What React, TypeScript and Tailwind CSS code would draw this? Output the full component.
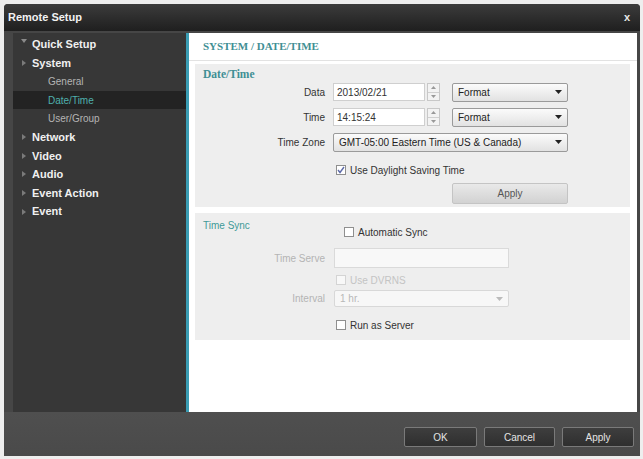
import React from "react";

const F = { fontFamily: '"Liberation Sans", Arial, sans-serif' };
const SERIF = { fontFamily: '"Liberation Serif", "Times New Roman", serif' };

function Tri({ down }: { down?: boolean }) {
  return (
    <svg width="6" height="6" viewBox="0 0 6 6" className="shrink-0">
      {down ? <path d="M0 1 L6 1 L3 5 Z" fill="#8a8a8a" /> : <path d="M1 0 L5 3 L1 6 Z" fill="#7a7a7a" />}
    </svg>
  );
}

function Caret({ color = "#222" }: { color?: string }) {
  return (
    <svg width="7" height="4" viewBox="0 0 7 4">
      <path d="M0 0 L7 0 L3.5 4 Z" fill={color} />
    </svg>
  );
}

function Select({ text, w, disabled }: { text: string; w: string; disabled?: boolean }) {
  return (
    <div
      className={`${w} h-full flex items-center justify-between px-[5px] rounded-[2px] border ${
        disabled
          ? "border-[#d8d8d8] bg-[#f7f7f7] text-[#b8b8b8]"
          : "border-[#9a9a9a] bg-gradient-to-b from-[#fbfbfb] to-[#e2e2e2] text-[#222]"
      } text-[10px]`}
    >
      <span>{text}</span>
      <Caret color={disabled ? "#bbb" : "#222"} />
    </div>
  );
}

function Check({ checked, label, disabled }: { checked?: boolean; label: string; disabled?: boolean }) {
  return (
    <div className={`flex items-center gap-[4px] text-[10px] ${disabled ? "text-[#c4c4c4]" : "text-[#333]"}`}>
      <div
        className={`w-[10px] h-[10px] border ${
          disabled ? "border-[#d4d4d4] bg-[#f8f8f8]" : "border-[#8f8f8f] bg-white"
        } flex items-center justify-center`}
      >
        {checked && (
          <svg width="8" height="8" viewBox="0 0 8 8">
            <path d="M1 4 L3 6.5 L7 1" stroke="#5d6aa8" strokeWidth="1.4" fill="none" />
          </svg>
        )}
      </div>
      <span>{label}</span>
    </div>
  );
}

function Label({ text, disabled }: { text: string; disabled?: boolean }) {
  return (
    <div className={`w-[130px] text-right text-[10px] ${disabled ? "text-[#b4b4b4]" : "text-[#333]"}`}>
      {text}
    </div>
  );
}

function Spinner() {
  return (
    <div className="w-[13px] h-[18px] ml-[2px] flex flex-col border border-[#c8c8c8] bg-[#f3f3f3]">
      <div className="flex-1 flex items-center justify-center border-b border-[#d0d0d0]">
        <svg width="5" height="3" viewBox="0 0 5 3"><path d="M0 3 L5 3 L2.5 0 Z" fill="#999" /></svg>
      </div>
      <div className="flex-1 flex items-center justify-center">
        <svg width="5" height="3" viewBox="0 0 5 3"><path d="M0 0 L5 0 L2.5 3 Z" fill="#999" /></svg>
      </div>
    </div>
  );
}

const nav: { t: string; lvl: 0 | 1; down?: boolean; sel?: boolean }[] = [
  { t: "Quick Setup", lvl: 0, down: true },
  { t: "System", lvl: 0 },
  { t: "General", lvl: 1 },
  { t: "Date/Time", lvl: 1, sel: true },
  { t: "User/Group", lvl: 1 },
  { t: "Network", lvl: 0 },
  { t: "Video", lvl: 0 },
  { t: "Audio", lvl: 0 },
  { t: "Event Action", lvl: 0 },
  { t: "Event", lvl: 0 },
];

export default function App() {
  return (
    <div className="w-[643px] h-[459px] bg-[#eeeeee] pl-[4px] pt-[4px] pr-[3px] pb-[3px]" style={F}>
      <div className="w-full h-full flex flex-col rounded-t-[4px] overflow-hidden bg-[#464646]">
        {/* title bar */}
        <div className="h-[27px] flex items-center justify-between pl-[4px] pr-[10px] bg-gradient-to-b from-[#3c3c3c] to-[#1f1f1f]">
          <span className="text-[11px] font-bold text-[#f2f2f2]">Remote Setup</span>
          <span className="text-[11px] font-bold text-[#e8e8e8]">x</span>
        </div>
        {/* body */}
        <div className="flex-1 flex pl-[9px] pr-[3px] pt-[2px] bg-[#464646]">
          {/* sidebar */}
          <div className="w-[173px] h-full bg-[#373737] pt-[2px]">
            {nav.map((n) => (
              <div
                key={n.t}
                className={`h-[18.6px] flex items-center ${n.sel ? "bg-[#232323]" : ""} ${
                  n.lvl === 0 ? "pl-[8px]" : "pl-[35px]"
                }`}
              >
                {n.lvl === 0 && (
                  <div className={`w-[11px] flex ${n.down ? "-mt-[6px]" : ""}`}>
                    <Tri down={n.down} />
                  </div>
                )}
                <span
                  className={
                    n.lvl === 0
                      ? "text-[11px] font-bold text-[#f0f0f0]"
                      : n.sel
                      ? "text-[10px] text-[#4fb0ad]"
                      : "text-[10px] text-[#b4b4b4]"
                  }
                >
                  {n.t}
                </span>
              </div>
            ))}
          </div>
          {/* content */}
          <div className="flex-1 h-full bg-white border-l-[3px] border-[#3a9db4] flex flex-col">
            <div className="h-[28px] flex items-center pl-[14px] border-b border-[#e2e2e2]">
              <span className="text-[11px] font-bold text-[#3f8f94]" style={SERIF}>
                SYSTEM / DATE/TIME
              </span>
            </div>
            {/* section 1 */}
            <div className="mt-[3px] ml-[6px] mr-[7px] bg-[#eeeeee] pt-[4px] pb-[3px]">
              <div className="h-[14px] flex items-center pl-[8px]">
                <span className="text-[11.5px] font-bold text-[#3f8f94]" style={SERIF}>
                  Date/Time
                </span>
              </div>
              <div className="h-[20px] flex items-center">
                <Label text="Data" />
                <div className="ml-[8px] w-[92px] h-[18px] bg-white border border-[#cfcfcf] flex items-center pl-[3px] text-[10px] text-[#333]">
                  2013/02/21
                </div>
                <Spinner />
                <div className="ml-[12px] h-[19px]">
                  <Select text="Format" w="w-[116px]" />
                </div>
              </div>
              <div className="mt-[5px] h-[20px] flex items-center">
                <Label text="Time" />
                <div className="ml-[8px] w-[92px] h-[18px] bg-white border border-[#cfcfcf] flex items-center pl-[3px] text-[10px] text-[#333]">
                  14:15:24
                </div>
                <Spinner />
                <div className="ml-[12px] h-[19px]">
                  <Select text="Format" w="w-[116px]" />
                </div>
              </div>
              <div className="mt-[5px] h-[20px] flex items-center">
                <Label text="Time Zone" />
                <div className="ml-[8px] h-[19px]">
                  <Select text="GMT-05:00 Eastern Time (US & Canada)" w="w-[235px]" />
                </div>
              </div>
              <div className="mt-[10px] h-[16px] flex items-center pl-[141px]">
                <Check checked label="Use Daylight Saving Time" />
              </div>
              <div className="mt-[5px] h-[21px] flex pl-[257px]">
                <div className="w-[116px] h-full rounded-[2px] border border-[#c4c4c4] bg-gradient-to-b from-[#e9e9e9] to-[#d2d2d2] flex items-center justify-center text-[10px] text-[#555]">
                  Apply
                </div>
              </div>
            </div>
            {/* section 2 */}
            <div className="mt-[6px] ml-[6px] mr-[7px] bg-[#eeeeee] pb-[8px]">
              <div className="flex items-start">
                <div className="w-[138px] pt-[5px] pl-[8px] h-[12px] leading-[12px] box-content">
                  <span className="text-[10px] text-[#3f9a98]">Time Sync</span>
                </div>
                <div className="pt-[12px] pl-[3px]">
                  <div className="h-[14px] flex items-center">
                    <Check label="Automatic Sync" />
                  </div>
                </div>
              </div>
              <div className="mt-[9px] h-[20px] flex items-center">
                <Label text="Time Serve" disabled />
                <div className="ml-[9px] w-[175px] h-[20px] bg-[#f8f8f8] border border-[#dadada]" />
              </div>
              <div className="mt-[5px] h-[14px] flex items-center pl-[141px]">
                <Check label="Use DVRNS" disabled />
              </div>
              <div className="mt-[3px] h-[17px] flex items-center">
                <Label text="Interval" disabled />
                <div className="ml-[9px] h-[17px]">
                  <Select text="1 hr." w="w-[175px]" disabled />
                </div>
              </div>
              <div className="mt-[11px] h-[14px] flex items-center pl-[141px]">
                <Check label="Run as Server" />
              </div>
            </div>
          </div>
        </div>
        {/* footer */}
        <div className="h-[44px] bg-gradient-to-b from-[#4f4f4f] to-[#4a4a4a] flex items-start justify-end pt-[15px] pr-[6px] gap-[7px]">
          {[
            ["OK", "w-[73px]"],
            ["Cancel", "w-[71px]"],
            ["Apply", "w-[72px]"],
          ].map(([t, w]) => (
            <div
              key={t}
              className={`${w} h-[20px] rounded-[2px] border border-[#7a7a7a] bg-gradient-to-b from-[#3e3e3e] to-[#2f2f2f] flex items-center justify-center text-[10px] text-[#e4e4e4]`}
            >
              {t}
            </div>
          ))}
        </div>
      </div>
    </div>
  );
}
